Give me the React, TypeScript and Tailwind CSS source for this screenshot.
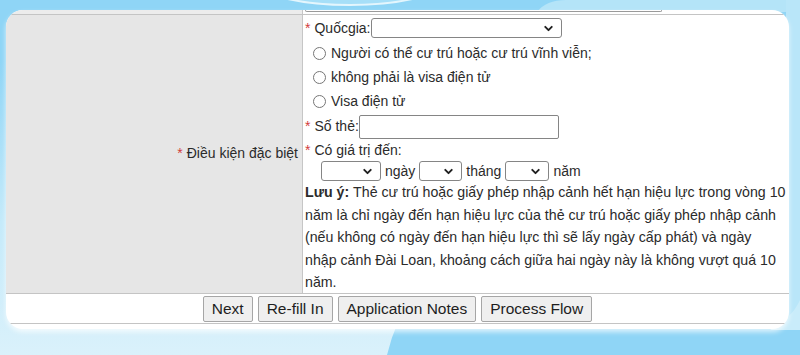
import { ChevronDown } from 'lucide-react';

function Select({ className }: { className: string }) {
  return (
    <span className={`relative inline-flex h-[20px] items-center rounded-[3px] border border-[#858585] bg-white ${className}`}>
      <select className="h-full w-full appearance-none bg-transparent outline-none" />
      <ChevronDown className="pointer-events-none absolute right-[6px] h-[13px] w-[13px] text-[#1f1f1f]" strokeWidth={3.5} />
    </span>
  );
}

function Req() {
  return <span className="mr-[4px] text-[#d23c3c]">*</span>;
}

function Radio({ label }: { label: string }) {
  return (
    <label className="flex h-[24px] items-center">
      <input type="radio" name="visa" className="m-0 ml-[8px] mr-[5px] h-[13px] w-[13px]" />
      <span>{label}</span>
    </label>
  );
}

const NOTE = [
  'Thẻ cư trú hoặc giấy phép nhập cảnh hết hạn hiệu lực trong vòng 10',
  'năm là chỉ ngày đến hạn hiệu lực của thẻ cư trú hoặc giấy phép nhập cảnh',
  '(nếu không có ngày đến hạn hiệu lực thì sẽ lấy ngày cấp phát) và ngày',
  'nhập cảnh Đài Loan, khoảng cách giữa hai ngày này là không vượt quá 10',
  'năm.',
];

const BUTTONS = ['Next', 'Re-fill In', 'Application Notes', 'Process Flow'];

export default function App() {
  return (
    <div className="relative h-[355px] w-[800px] overflow-hidden bg-[#8fd5f6] font-['Liberation_Sans',Arial,sans-serif] text-[14px] text-[#2b2b2b]">
      <svg className="absolute inset-0" width="800" height="355" viewBox="0 0 800 355">
        <defs>
          <linearGradient id="lft" x1="0" y1="0" x2="0" y2="1">
            <stop offset="0" stopColor="#8fd5f6" />
            <stop offset="0.55" stopColor="#c4eafa" />
            <stop offset="1" stopColor="#daf1fb" />
          </linearGradient>
        </defs>
        <path d="M0 60 L0 355 L387 355 Q391 338 398 322 L398 60 Z" fill="url(#lft)" />
        <ellipse cx="350" cy="-26" rx="105" ry="31" fill="#a6dff8" stroke="#e4f6fd" strokeWidth="2" />
        <path d="M537 12 Q546 0 566 0 L800 0 L800 12 Z" fill="#b4e4f8" />
        <rect x="786" y="0" width="14" height="330" fill="#b9e6f9" />
        <path d="M770 330 Q792 318 800 300 L800 330 Z" fill="#c9ecfa" />
      </svg>

      <div className="relative ml-[6px] mt-[10px] flex h-[319px] w-[783px] flex-col overflow-hidden rounded-[17px] bg-white shadow-[0_3px_5px_rgba(255,255,255,0.7)]">
        {/* tail of the previous row */}
        <div className="flex h-[4px]">
          <div className="w-[296px] bg-[#ececec]" />
          <div className="flex-1 border-l border-[#c6c6c6]">
            <div className="ml-[2px] h-[2px] w-[357px] rounded-b-[2px] border-x border-b border-[#9a9a9a]" />
          </div>
        </div>
        <div className="h-px bg-[#c4c4c4]" />

        <div className="flex h-[278px]">
          <div className="flex w-[296px] items-center justify-end bg-[#e6e6e6] pb-[2px] pr-[4px]">
            <Req />
            <span>Điều kiện đặc biệt</span>
          </div>
          <div className="flex-1 border-l border-[#c6c6c6] pl-[2px]">
            <div className="flex h-[26px] items-center">
              <Req />
              <span>Quốcgia:</span>
              <Select className="w-[191px]" />
            </div>
            <Radio label="Người có thể cư trú hoặc cư trú vĩnh viễn;" />
            <Radio label="không phải là visa điện tử" />
            <Radio label="Visa điện tử" />
            <div className="flex h-[27px] items-center">
              <Req />
              <span>Số thẻ:</span>
              <input className="h-[24px] w-[200px] rounded-[2px] border border-[#858585] bg-white" />
            </div>
            <div className="flex h-[21px] items-center">
              <Req />
              <span>Có giá trị đến:</span>
            </div>
            <div className="flex h-[20px] items-center gap-[4px] pl-[16px]">
              <Select className="w-[60px]" />
              <span>ngày</span>
              <Select className="w-[43px]" />
              <span>tháng</span>
              <Select className="w-[44px]" />
              <span>năm</span>
            </div>
            <div className="text-[14.2px] leading-[22.5px]">
              {NOTE.map((line, i) => (
                <div key={i} className="whitespace-nowrap">
                  {i === 0 && <b className="font-bold">Lưu ý: </b>}
                  {line}
                </div>
              ))}
            </div>
          </div>
        </div>
        <div className="h-px bg-[#c4c4c4]" />

        <div className="flex h-[29px] items-center justify-center gap-[5px]">
          {BUTTONS.map((b) => (
            <button
              key={b}
              className="h-[26px] rounded-[2px] border border-[#a6a6a6] bg-[#efefef] px-[8px] text-[15.5px] text-[#1e1e1e]"
            >
              {b}
            </button>
          ))}
        </div>
        <div className="h-px bg-[#c4c4c4]" />
      </div>
    </div>
  );
}
